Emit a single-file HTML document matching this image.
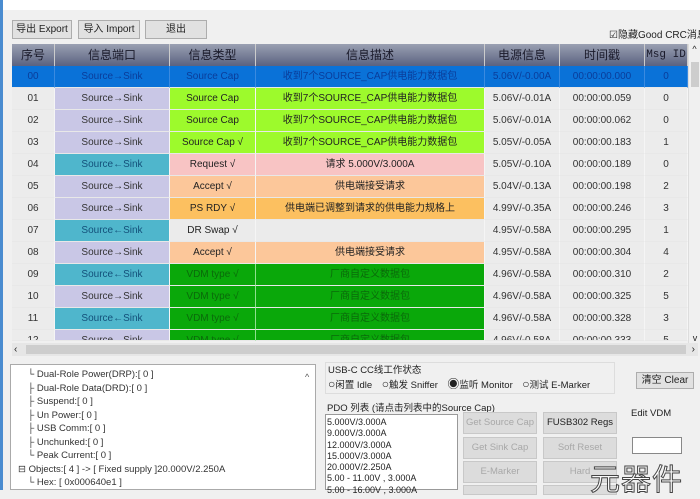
<!DOCTYPE html>
<html><head><meta charset="utf-8"><style>
*{box-sizing:border-box;margin:0;padding:0}
body{width:700px;height:490px;overflow:hidden;background:#f0f0f0;font-family:"Liberation Sans","Noto Sans CJK SC",sans-serif;font-size:10px;color:#222;position:relative}
.a{position:absolute}
.btn{position:absolute;background:#e1e1e1;border:1px solid #adadad;text-align:center;font-size:10px;line-height:17px}
.hdr{position:absolute;top:44px;height:22px;background:linear-gradient(#9aa0b2,#5a6280);color:#1a1a2a;font-size:12px;text-align:center;line-height:22px;border-right:1px solid #ccc}
.c{position:absolute;height:22px;line-height:22px;text-align:center;font-size:10px;white-space:nowrap;overflow:hidden;border-bottom:1px solid #e8e8e8}
.tree div{height:13.5px;line-height:13.5px;font-size:9.5px;color:#333}
.pb{position:absolute;background:#dcdcdc;border:1px solid #c8c8c8;color:#a8a8a8;text-align:center;line-height:26px;font-size:9.5px}
</style></head><body>
<div class="a" style="left:0;top:0;width:3px;height:490px;background:#4a8cd0"></div>
<div class="a" style="left:3px;top:0;width:697px;height:10px;background:#fff"></div>
<div class="btn" style="left:12px;top:20px;width:60px;height:19px">导出 Export</div>
<div class="btn" style="left:78px;top:20px;width:62px;height:19px">导入 Import</div>
<div class="btn" style="left:145px;top:20px;width:62px;height:19px">退出</div>
<div class="a" style="left:609px;top:26px;font-size:10px;white-space:nowrap">☑隐藏Good CRC消息</div>
<div class="a" style="left:12px;top:44px;width:676px;height:301px;background:#f0f0f0"></div>
<div class="hdr" style="left:12px;width:43px">序号</div>
<div class="hdr" style="left:55px;width:115px">信息端口</div>
<div class="hdr" style="left:170px;width:86px">信息类型</div>
<div class="hdr" style="left:256px;width:229px">信息描述</div>
<div class="hdr" style="left:485px;width:75px">电源信息</div>
<div class="hdr" style="left:560px;width:85px">时间戳</div>
<div class="hdr" style="left:645px;width:43px;font-family:'Liberation Mono',monospace;font-size:11px">Msg ID</div>
<div class="a" style="left:688px;top:44px;width:12px;height:301px;background:#f0f0f0;border-left:1px solid #ddd;font-size:9px;text-align:center">^<div style="position:absolute;top:18px;left:2px;width:8px;height:25px;background:#cdcdcd"></div><div style="position:absolute;bottom:2px;width:12px">v</div></div>
<div id="rows"></div>
<div class="a" style="left:12px;top:343px;width:686px;height:13px;background:#e6e6e6;font-size:10px;padding-left:2px;line-height:13px">‹<div class="a" style="left:14px;top:2px;width:660px;height:9px;background:#cdcdcd"></div><span style="position:absolute;right:3px">›</span></div>
<div class="a" style="left:10px;top:364px;width:306px;height:126px;background:#fff;border:1px solid #aaa"></div>
<div class="a tree" style="left:18px;top:368px;width:290px">
<div>　└ Dual-Role Power(DRP):[ 0 ]</div>
<div>　├ Dual-Role Data(DRD):[ 0 ]</div>
<div>　├ Suspend:[ 0 ]</div>
<div>　├ Un Power:[ 0 ]</div>
<div>　├ USB Comm:[ 0 ]</div>
<div>　├ Unchunked:[ 0 ]</div>
<div>　└ Peak Current:[ 0 ]</div>
<div>⊟ Objects:[ 4 ] -&gt; [ Fixed supply ]20.000V/2.250A</div>
<div>　└ Hex: [ 0x000640e1 ]</div>
</div>
<div class="a" style="left:305px;top:372px;font-size:9px;color:#555">^</div>
<div class="a" style="left:325px;top:362px;width:290px;height:32px;border:1px solid #ddd"></div>
<div class="a" style="left:328px;top:362px;font-size:9.5px">USB-C CC线工作状态</div>
<div class="a" style="left:328px;top:375px;font-size:9.5px;white-space:nowrap"><span style="font-size:12px">○</span>闲置 Idle　<span style="font-size:12px">○</span>触发 Sniffer　<span style="font-size:12px">◉</span>监听 Monitor　<span style="font-size:12px">○</span>测试 E-Marker</div>
<div class="btn" style="left:636px;top:372px;width:58px;height:17px;font-size:10px;line-height:15px">清空 Clear</div>
<div class="a" style="left:327px;top:400px;font-size:9.5px">PDO 列表 (请点击列表中的Source Cap)</div>
<div class="a" style="left:325px;top:414px;width:133px;height:76px;background:#fff;border:1px solid #999;font-size:9px;line-height:11.3px;padding:2px 1px">5.000V/3.000A<br>9.000V/3.000A<br>12.000V/3.000A<br>15.000V/3.000A<br>20.000V/2.250A<br>5.00 - 11.00V , 3.000A<br>5.00 - 16.00V , 3.000A</div>
<div class="pb" style="left:463px;top:412px;width:74px;height:22px;line-height:20px">Get Source Cap</div>
<div class="pb" style="left:543px;top:412px;width:74px;height:22px;line-height:20px;color:#222">FUSB302 Regs</div>
<div class="pb" style="left:463px;top:437px;width:74px;height:22px;line-height:20px">Get Sink Cap</div>
<div class="pb" style="left:543px;top:437px;width:74px;height:22px;line-height:20px">Soft Reset</div>
<div class="pb" style="left:463px;top:461px;width:74px;height:22px;line-height:20px">E-Marker</div>
<div class="pb" style="left:543px;top:461px;width:74px;height:22px;line-height:20px">Hard</div>
<div class="pb" style="left:463px;top:485px;width:74px;height:10px"></div>
<div class="pb" style="left:543px;top:485px;width:74px;height:10px"></div>
<div class="a" style="left:631px;top:408px;font-size:9.5px">Edit VDM</div>
<div class="a" style="left:632px;top:437px;width:50px;height:17px;background:#fff;border:1px solid #888"></div>
<div class="a" style="left:590px;top:455px;font-size:30px;color:rgba(255,255,255,0.85);-webkit-text-stroke:1px #444;letter-spacing:1px;white-space:nowrap">元器件</div>
<script>
var R=[
["00","Source→Sink","Source Cap","收到7个SOURCE_CAP供电能力数据包","5.06V/-0.00A","00:00:00.000","0"],
["01","Source→Sink","Source Cap","收到7个SOURCE_CAP供电能力数据包","5.06V/-0.01A","00:00:00.059","0"],
["02","Source→Sink","Source Cap","收到7个SOURCE_CAP供电能力数据包","5.06V/-0.01A","00:00:00.062","0"],
["03","Source→Sink","Source Cap √","收到7个SOURCE_CAP供电能力数据包","5.05V/-0.05A","00:00:00.183","1"],
["04","Source←Sink","Request √","请求 5.000V/3.000A","5.05V/-0.10A","00:00:00.189","0"],
["05","Source→Sink","Accept √","供电端接受请求","5.04V/-0.13A","00:00:00.198","2"],
["06","Source→Sink","PS RDY √","供电端已调整到请求的供电能力规格上","4.99V/-0.35A","00:00:00.246","3"],
["07","Source←Sink","DR Swap √","","4.95V/-0.58A","00:00:00.295","1"],
["08","Source→Sink","Accept √","供电端接受请求","4.95V/-0.58A","00:00:00.304","4"],
["09","Source←Sink","VDM type √","厂商自定义数据包","4.96V/-0.58A","00:00:00.310","2"],
["10","Source→Sink","VDM type √","厂商自定义数据包","4.96V/-0.58A","00:00:00.325","5"],
["11","Source←Sink","VDM type √","厂商自定义数据包","4.96V/-0.58A","00:00:00.328","3"],
["12","Source→Sink","VDM type √","厂商自定义数据包","4.96V/-0.58A","00:00:00.333","5"]];
var X=[12,55,170,256,485,560,645,688];
var h="";
R.forEach(function(r,i){
 var y=66+22*i;
 var sel=i==0;
 var port=r[1].indexOf("←")>0?"#4fb6cc":"#c9c7e6";
 var t=["#9dfa2c","#9dfa2c","#9dfa2c","#9dfa2c","#f8c4c4","#fcc79a","#fcc060","#ebebeb","#fcc79a","#0aa80a","#0aa80a","#0aa80a","#0aa80a"][i];
 var tc=i>=9?"#0a6a0a":"#222";
 var hh=i==12?11:22;
 for(var k=0;k<7;k++){
  var bg="#ececec",col="#333";
  if(k==1)bg=port; if(k==2||k==3)bg=t; if(k==2||k==3)col=tc;
  if(k==1)col=r[1].indexOf("←")>0?"#13507a":"#333";
  if(i==7&&k==3)bg="#ebebeb";
  if(sel){bg="#0a72d8";col="#0a3d9a";}
  h+='<div class="c" style="left:'+X[k]+'px;top:'+y+'px;width:'+(X[k+1]-X[k])+'px;height:'+hh+'px;background:'+bg+';color:'+col+';border-right:1px solid '+(sel?'#3a8ae0':(k==2&&i>=9?'#8fe08f':'#f5f5f5'))+'">'+r[k]+'</div>';
 }
});
document.getElementById("rows").innerHTML=h;
</script>
</body></html>
